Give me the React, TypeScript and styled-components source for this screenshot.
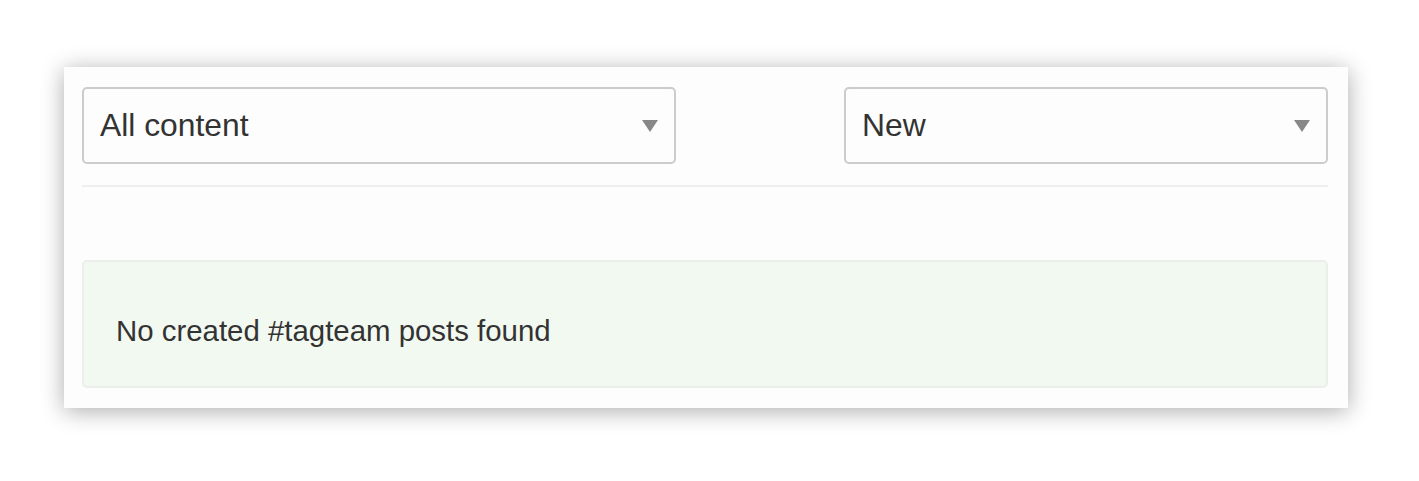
import React from 'react';
import styled, { createGlobalStyle } from 'styled-components';

const GlobalStyle = createGlobalStyle`
    html, body {
        margin: 0;
        padding: 0;
        background: #ffffff;
        font-family: "Liberation Sans", Arial, Helvetica, sans-serif;
        color: #333333;
    }
`;

const Page = styled.div`
    padding: 67px 71px 73px 64px;
`;

const Panel = styled.section`
    background: #fdfdfd;
    box-shadow: 0 3px 22px rgba(0, 0, 0, 0.33);
    padding: 20px 20px 20px 18px;
    display: flex;
    flex-direction: column;
`;

const Filters = styled.div`
    display: flex;
    justify-content: space-between;
    align-items: center;
    padding-bottom: 21px;
    border-bottom: 2px solid #eeeeee;
`;

const SelectBox = styled.div<{ $width: number }>`
    width: ${(p) => p.$width}px;
    height: 77px;
    box-sizing: border-box;
    border: 2px solid #cccccc;
    border-radius: 5px;
    background: #fdfdfd;
    display: flex;
    align-items: center;
    padding: 0 16px;
    font-size: 31.8px;
    color: #333333;
`;

const Label = styled.span`
    flex: 1;
`;

const Caret = styled.span`
    width: 0;
    height: 0;
    border-left: 8px solid transparent;
    border-right: 8px solid transparent;
    border-top: 12px solid #888888;
`;

const Alert = styled.div`
    margin-top: 73px;
    height: 128px;
    box-sizing: border-box;
    background: #f2f9f0;
    border: 2px solid #ebefea;
    border-radius: 5px;
    padding: 14px 32px 0;
    display: flex;
    align-items: center;
    font-size: 29.4px;
    color: #333333;
`;

function Select({ label, width }: { label: string; width: number }) {
    return (
        <SelectBox $width={width}>
            <Label>{label}</Label>
            <Caret aria-hidden="true" />
        </SelectBox>
    );
}

export default function App() {
    return (
        <Page>
            <GlobalStyle />
            <Panel>
                <Filters>
                    <Select label="All content" width={594} />
                    <Select label="New" width={484} />
                </Filters>
                <Alert>No created #tagteam posts found</Alert>
            </Panel>
        </Page>
    );
}
